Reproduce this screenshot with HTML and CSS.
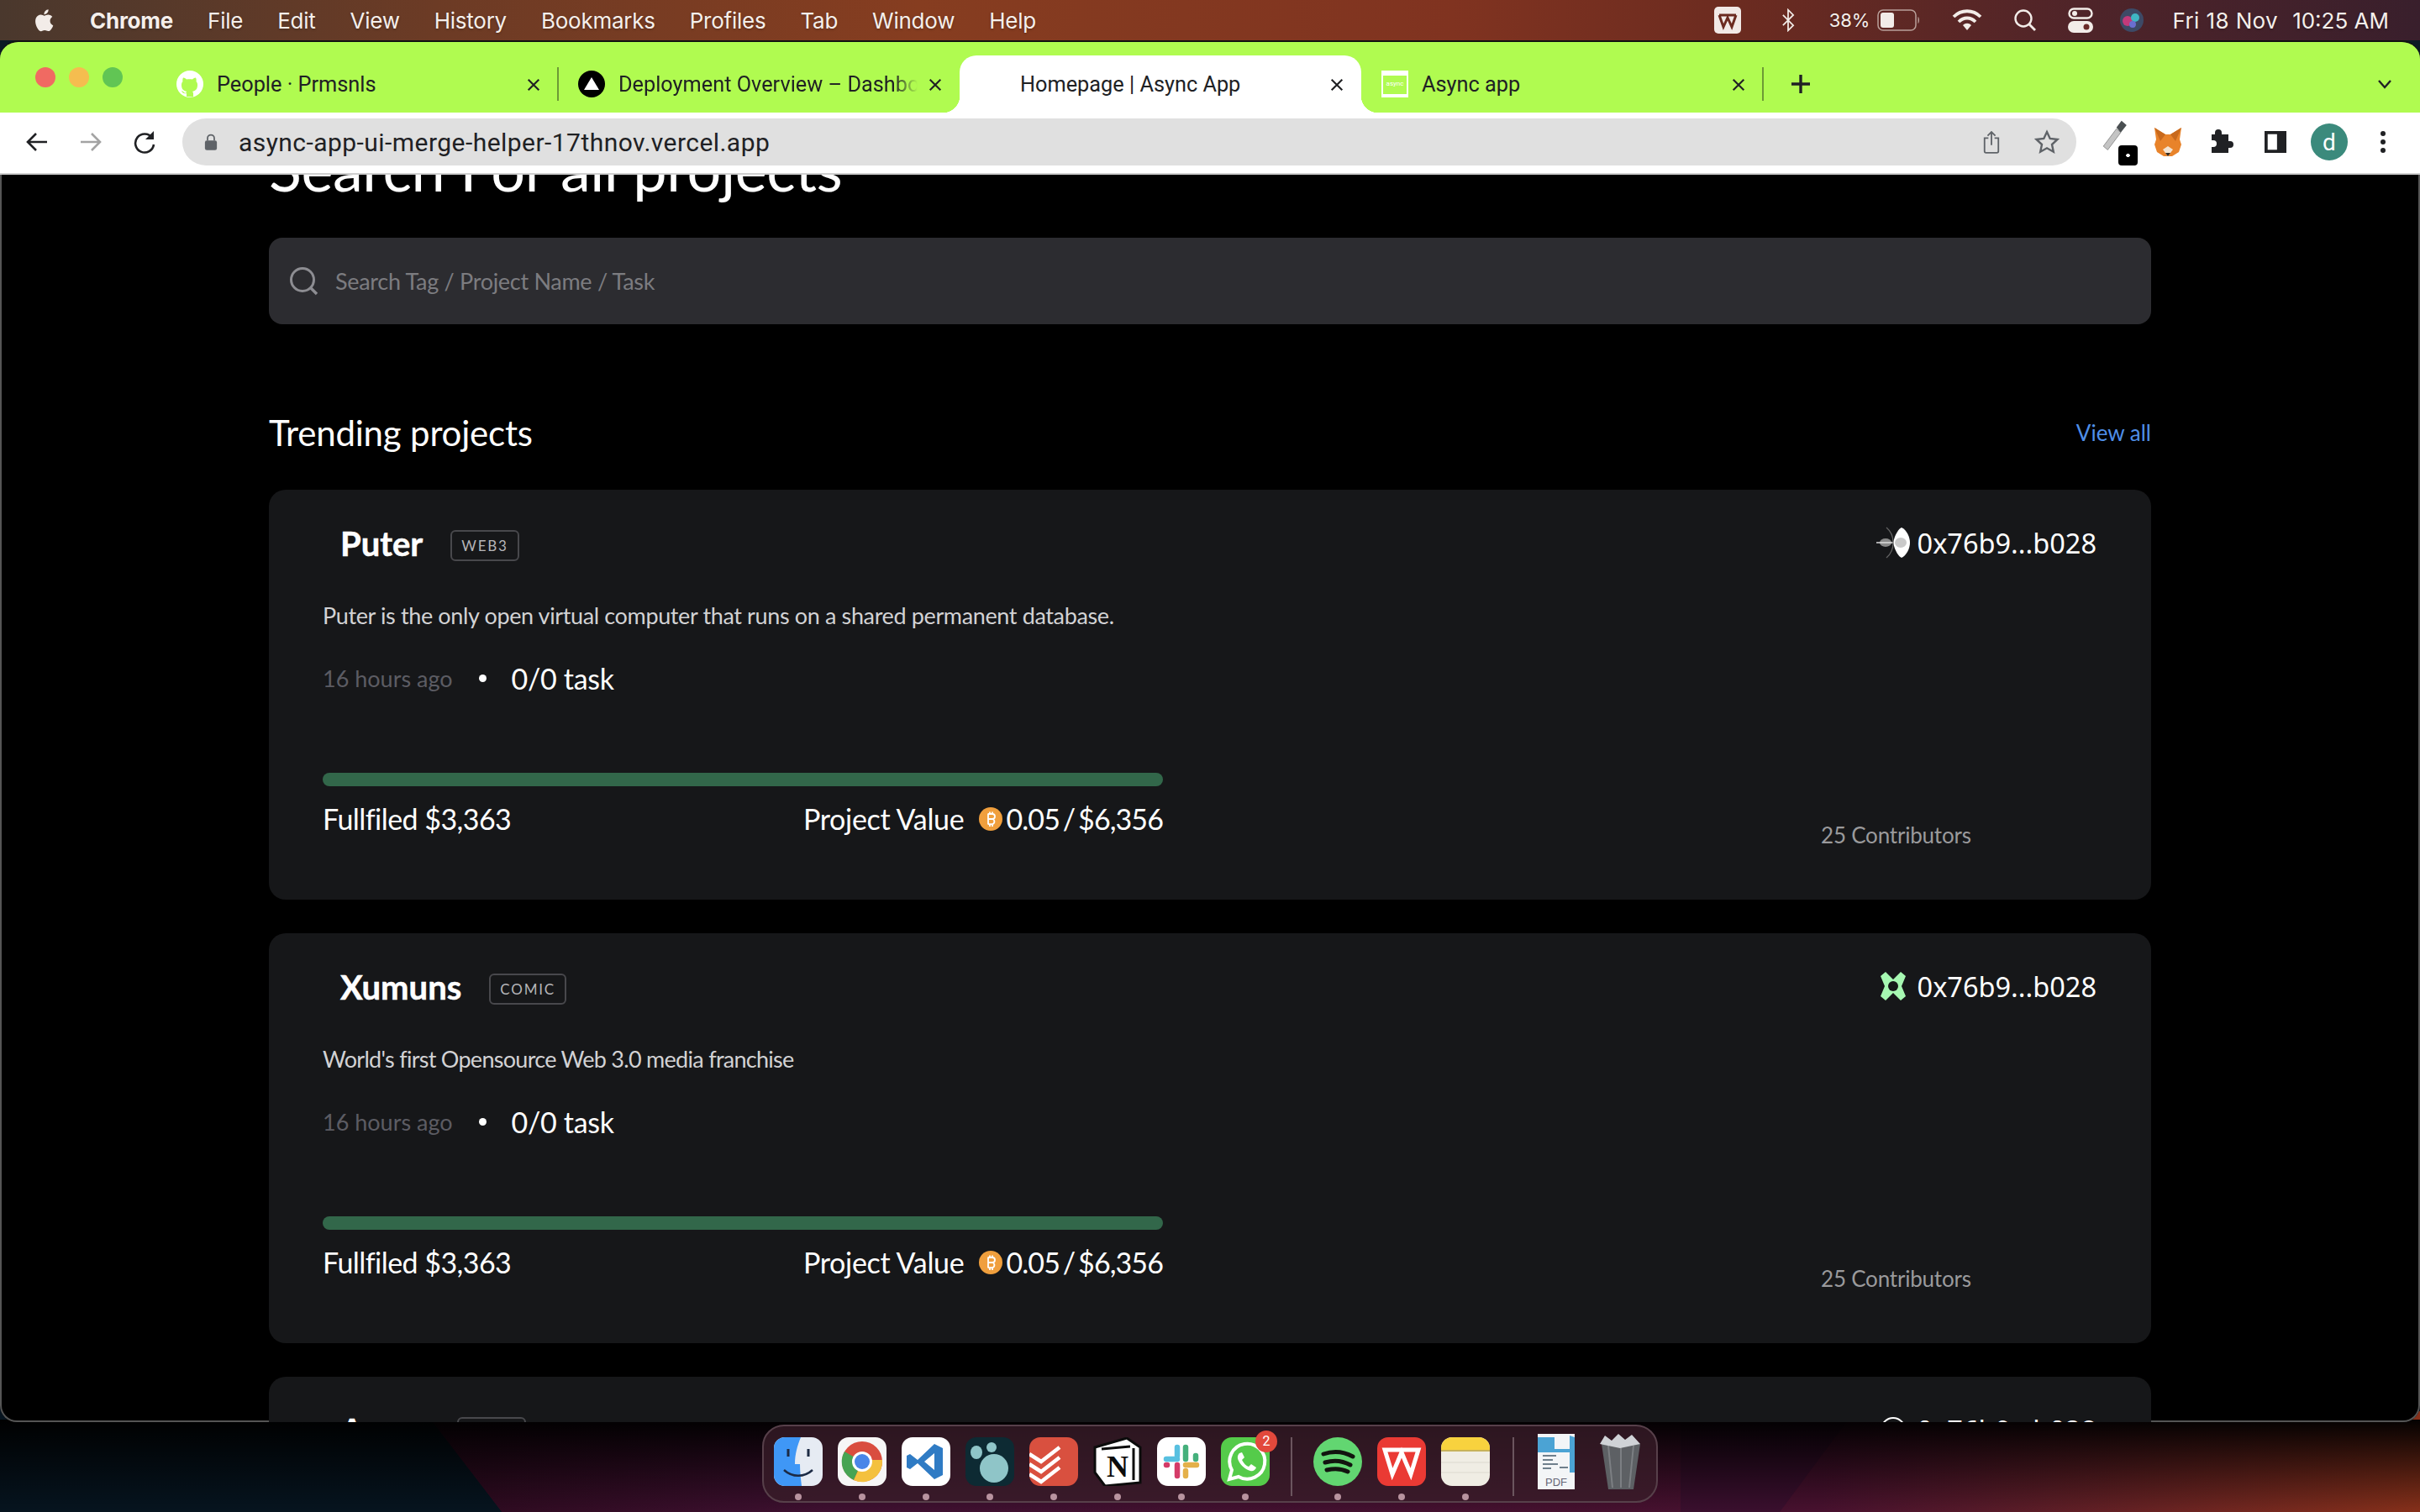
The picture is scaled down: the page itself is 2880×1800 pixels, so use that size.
FILE: index.html
```html
<!DOCTYPE html>
<html lang="en">

<head>
    <meta charset="UTF-8">
    <title>Homepage | Async App</title>
    <link rel="stylesheet" href="styles.css">
</head>

<body>
    <svg class="hidden-defs" width="0" height="0">
        <defs>
            <symbol id="close" viewBox="0 0 20 20">
                <path d="M3 3l14 14M17 3L3 17" stroke="#202124" stroke-width="2.4" fill="none" />
            </symbol>
            <symbol id="coin" viewBox="0 0 28 28">
                <circle cx="14" cy="14" r="14" fill="#f09f3d" />
                <path d="M11 7.5v13M11 8h5a3 3 0 0 1 0 6h-5m5 0a3.2 3.2 0 0 1 0 6.2h-5M13 5.5v3M16 5.5v3M13 20v3M16 20v3" stroke="#fff" stroke-width="1.8" fill="none" />
            </symbol>
            <symbol id="puter" viewBox="0 0 40 40">
                <path d="M20 20C22 10 27 3 30 2c6 3 10 11 10 18s-4 15-10 18c-3-1-8-8-10-18z" fill="#fff" />
                <ellipse cx="29" cy="20" rx="7" ry="6" fill="#c9c9c9" />
                <ellipse cx="11" cy="20" rx="7" ry="5" fill="#8a8a8a" />
                <path d="M0 20h20" stroke="#ddd" stroke-width="1.5" />
                <path d="M12 2c6 5 8 11 8 18s-2 13-8 18" stroke="#666" stroke-width="1.2" fill="none" />
            </symbol>
            <symbol id="xumuns" viewBox="0 0 32 36">
                <path d="M1 6l6-5 9 9 9-9 6 5-5 12 5 12-6 5-9-9-9 9-6-5 5-12z" fill="#a6f8b2" />
                <circle cx="16" cy="18" r="6" fill="#161719" />
            </symbol>
        </defs>
    </svg>

    <svg class="wallpaper" viewBox="0 0 2880 1800" preserveAspectRatio="none">
        <defs>
            <linearGradient id="wall-warm" x1="0" x2="1" y1="0" y2="0">
                <stop offset="0" stop-color="#2c0a1e" />
                <stop offset="0.2" stop-color="#3e1030" />
                <stop offset="0.7" stop-color="#48112f" />
                <stop offset="0.8" stop-color="#5a1c28" />
                <stop offset="1" stop-color="#86301a" />
            </linearGradient>
            <linearGradient id="wall-shade" x1="0" x2="0" y1="0" y2="1">
                <stop offset="0" stop-color="#000" stop-opacity="0.97" />
                <stop offset="1" stop-color="#000" stop-opacity="0" />
            </linearGradient>
        </defs>
        <rect width="2880" height="1800" fill="#0c1a24" />
        <polygon points="505,1680 2880,1680 2880,1800 597,1800" fill="url(#wall-warm)" />
        <polygon points="2207,1680 2118,1800 2000,1800 2000,1680" fill="#3a0f2e" />
        <polygon points="0,1680 505,1680 597,1800 0,1800" fill="#06141f" />
        <rect y="1690" width="2880" height="110" fill="url(#wall-shade)" />
    </svg>

    <header class="menubar">
        <div class="menu-left">
            <svg class="apple" viewBox="0 0 26 32">
                <path d="M21.6 17c0-3.3 2.7-4.800 2.800-4.900-1.500-2.200-3.900-2.500-4.700-2.600-2-.2-3.900 1.200-4.900 1.200-1 0-2.600-1.200-4.300-1.100-2.200 0-4.200 1.300-5.300 3.200-2.300 4-.6 9.900 1.600 13.100 1.100 1.600 2.400 3.400 4.100 3.300 1.600-.1 2.300-1.100 4.300-1.100s2.600 1.100 4.300 1c1.800 0 2.900-1.600 4-3.200 1.300-1.800 1.800-3.600 1.800-3.700-.1 0-3.700-1.400-3.700-5.200zM18.300 7.300c.9-1.100 1.500-2.600 1.300-4.100-1.300.1-2.900.9-3.800 2-.8 1-1.500 2.500-1.300 4 1.400.1 2.900-.8 3.800-1.900z" fill="#f2ece8" />
            </svg>
            <span class="app-name">Chrome</span>
            <span>File</span>
            <span>Edit</span>
            <span>View</span>
            <span>History</span>
            <span>Bookmarks</span>
            <span>Profiles</span>
            <span>Tab</span>
            <span>Window</span>
            <span>Help</span>
        </div>
        <div class="menu-right">
            <svg class="status-wps" viewBox="0 0 32 32">
                <rect width="32" height="32" rx="5" fill="#f1e9e6" />
                <path d="M6 10l5 14 5-11 5 11 5-14M6 10h20" stroke="#6b2a20" stroke-width="3" fill="none" />
            </svg>
            <svg class="status-bt" viewBox="0 0 20 32">
                <path d="M3 9l14 14-7 7V2l7 7L3 23" stroke="#f2ece8" stroke-width="2" fill="none" />
            </svg>
            <span class="status-pct">38%</span>
            <svg class="status-battery" viewBox="0 0 52 26">
                <rect x="1" y="1" width="45" height="24" rx="6" stroke="#b9a09a" stroke-width="1.500" fill="none" />
                <rect x="4" y="4" width="16" height="18" rx="3" fill="#f2ece8" />
                <path d="M48.500 9c2 1 2 7 0 8z" fill="#b9a09a" />
            </svg>
            <svg class="status-wifi" viewBox="0 0 36 26">
                <path d="M2 9c9-9 23-9 32 0M8 15c6-6 14-6 20 0" stroke="#f2ece8" stroke-width="3.800" fill="none" />
                <path d="M13 19c3-3 7-3 10 0l-5 6z" fill="#f2ece8" />
            </svg>
            <svg class="status-search" viewBox="0 0 28 28">
                <circle cx="12" cy="12" r="9.500" stroke="#f2ece8" stroke-width="2.400" fill="none" />
                <path d="M19 19l7 7" stroke="#f2ece8" stroke-width="2.800" />
            </svg>
            <svg class="status-control" viewBox="0 0 30 30">
                <rect x="1.500" y="1.500" width="27" height="11" rx="5.500" stroke="#f2ece8" stroke-width="2.400" fill="none" />
                <circle cx="8" cy="7" r="3" fill="#f2ece8" />
                <rect x="0" y="16" width="30" height="14" rx="7" fill="#f2ece8" />
                <circle cx="22" cy="23" r="3.500" fill="#6a2a28" />
            </svg>
            <svg class="status-siri" viewBox="0 0 28 28">
                <circle cx="14" cy="14" r="14" fill="#3d4a66" />
                <circle cx="9" cy="15" r="6" fill="#c23a7a" />
                <circle cx="18" cy="11" r="5" fill="#3fb6c4" />
                <circle cx="15" cy="19" r="4" fill="#6a6fd0" />
            </svg>
            <span class="status-date">Fri 18 Nov</span>
            <span class="status-time">10:25 AM</span>
        </div>
    </header>

    <main class="window">
        <div class="tabstrip">
            <div class="lights">
                <span class="light light-red"></span>
                <span class="light light-yellow"></span>
                <span class="light light-green"></span>
            </div>
            <div class="tab">
                <svg class="favicon" viewBox="0 0 32 32">
                    <circle cx="16" cy="16" r="16" fill="#fff" />
                    <path d="M12 31v-4c-4 1-5-1-6-3 1 0 2 1 3 2 1 1 3 1 3-1-4-1-6-3-6-8 0-2 .5-3 1.500-4-.3-1-.3-3 .5-4.500 2 0 3 1 4 2 2-.5 5-.5 7 0 1-1 2-2 4-2 .8 1.500.8 3.500.5 4.500 1 1 1.500 2 1.500 4 0 5-2 7-6 8 1 1 1 2 1 3v3.500z" fill="#b0fb50" />
                </svg>
                <span class="tab-title">People · Prmsnls</span>
                <svg class="tab-close"><use href="#close" /></svg>
            </div>
            <span class="tab-sep"></span>
            <div class="tab">
                <svg class="favicon" viewBox="0 0 32 32">
                    <circle cx="16" cy="16" r="16" fill="#000" />
                    <path d="M16 8l9 15H7z" fill="#fff" />
                </svg>
                <span class="tab-title tab-title-fade">Deployment Overview – Dashboard</span>
                <svg class="tab-close"><use href="#close" /></svg>
            </div>
            <div class="tab tab-active">
                <span class="favicon"></span>
                <span class="tab-title">Homepage | Async App</span>
                <svg class="tab-close"><use href="#close" /></svg>
            </div>
            <div class="tab">
                <span class="favicon favicon-async">async</span>
                <span class="tab-title">Async app</span>
                <svg class="tab-close"><use href="#close" /></svg>
            </div>
            <span class="tab-sep"></span>
            <svg class="tab-new" viewBox="0 0 24 24">
                <path d="M12 1v22M1 12h22" stroke="#202124" stroke-width="3.400" />
            </svg>
            <svg class="tab-list" viewBox="0 0 18 12">
                <path d="M2 2l7 8 7-8" stroke="#202124" stroke-width="2.400" fill="none" />
            </svg>
        </div>

        <div class="toolbar">
            <svg class="nav-icon" viewBox="0 0 28 28">
                <path d="M26 14H4M13 4L3 14l10 10" stroke="#202124" stroke-width="2.600" fill="none" />
            </svg>
            <svg class="nav-icon" viewBox="0 0 28 28">
                <path d="M2 14h22M15 4l10 10-10 10" stroke="#a3a3a3" stroke-width="2.600" fill="none" />
            </svg>
            <svg class="nav-icon" viewBox="0 0 28 28">
                <path d="M23 9A11 11 0 1 0 25 17" stroke="#202124" stroke-width="2.600" fill="none" />
                <path d="M25 1v10H15z" fill="#202124" />
            </svg>
            <div class="urlbar">
                <svg class="lock" viewBox="0 0 18 24">
                    <path d="M4.500 10V7a4.500 4.500 0 0 1 9 0v3" stroke="#5f6368" stroke-width="2" fill="none" />
                    <rect x="1" y="10" width="16" height="13" rx="2.500" fill="#5f6368" />
                </svg>
                <span class="url-text">async-app-ui-merge-helper-17thnov.vercel.app</span>
                <svg class="url-share" viewBox="0 0 24 30">
                    <path d="M8 10H3v17a2 2 0 0 0 2 2h14a2 2 0 0 0 2-2V10h-5M12 19V2M7 7l5-5 5 5" stroke="#5f6368" stroke-width="2" fill="none" />
                </svg>
                <svg class="url-star" viewBox="0 0 30 30">
                    <path d="M15 3l3.700 8 8.800 1-6.500 6 1.800 8.700L15 22.300l-7.800 4.400L9 18l-6.500-6 8.800-1z" stroke="#5f6368" stroke-width="2.400" fill="none" />
                </svg>
            </div>
            <div class="ext-icons">
                <span class="ext ext-dropper">
                    <svg viewBox="0 0 36 44">
                        <path d="M2 36L20 12l6 5L8 41z" fill="#c4c4c4" stroke="#8a8a8a" />
                        <path d="M20 10L27 1l7 6-8 10z" fill="#4a4f52" />
                    </svg>
                    <span class="ext-badge"></span>
                </span>
                <svg class="ext ext-fox" viewBox="0 0 36 36">
                    <path d="M2 1l13 8h6l13-8-2 14 2 6-3 9-8 5h-10l-8-5-3-9 2-6z" fill="#e8832a" />
                    <path d="M2 1l13 8-6 8zM34 1L21 9l6 8z" fill="#c8691c" />
                    <path d="M12 27l6 8 6-8-6-4z" fill="#f4e3d0" />
                    <path d="M15 31h6l-3 4z" fill="#33291f" />
                </svg>
                <svg class="ext ext-puzzle" viewBox="0 0 30 30">
                    <path d="M11 1a4 4 0 0 1 4 4v2h8v8h2a4 4 0 0 1 0 8h-2v6H3v-7h2a4 4 0 0 0 0-8H3V7h4V5a4 4 0 0 1 4-4z" fill="#202124" transform="translate(-1 -1)" />
                </svg>
                <svg class="ext ext-sidebar" viewBox="0 0 28 28">
                    <rect x="2" y="2" width="24" height="24" fill="none" stroke="#202124" stroke-width="4" />
                    <rect x="16" y="2" width="10" height="24" fill="#202124" />
                </svg>
                <span class="avatar">d</span>
                <svg class="ext ext-more" viewBox="0 0 8 28">
                    <circle cx="4" cy="4" r="3" fill="#202124" />
                    <circle cx="4" cy="14" r="3" fill="#202124" />
                    <circle cx="4" cy="24" r="3" fill="#202124" />
                </svg>
            </div>
        </div>

        <div class="page">
            <h1 class="page-title">Search For all projects</h1>

            <div class="search-box">
                <svg class="search-icon" viewBox="0 0 36 36">
                    <circle cx="16" cy="16" r="13.500" stroke="#8d8d92" stroke-width="3" fill="none" />
                    <path d="M26 26l7 7" stroke="#8d8d92" stroke-width="3.400" />
                </svg>
                <span class="search-placeholder">Search Tag / Project Name / Task</span>
            </div>

            <div class="section-head">
                <h2>Trending projects</h2>
                <a class="view-all">View all</a>
            </div>

            <article class="card">
                <div class="card-top">
                    <h3 class="card-name">Puter</h3>
                    <span class="card-tag">WEB3</span>
                    <div class="card-owner">
                        <svg class="owner-icon"><use href="#puter" /></svg>
                        <span>0x76b9...b028</span>
                    </div>
                </div>
                <p class="card-desc">Puter is the only open virtual computer that runs on a shared permanent database.</p>
                <div class="card-meta">
                    <span class="meta-time">16 hours ago</span>
                    <span class="meta-dot"></span>
                    <span class="meta-task">0/0 task</span>
                </div>
                <div class="card-bottom">
                    <div class="funding">
                        <div class="progress"></div>
                        <div class="funding-row">
                            <span>Fullfiled $3,363</span>
                            <span class="funding-value">Project Value <svg class="coin"><use href="#coin" /></svg><span class="funding-amount">0.05 / $6,356</span></span>
                        </div>
                    </div>
                    <span class="contributors">25 Contributors</span>
                </div>
            </article>

            <article class="card">
                <div class="card-top">
                    <h3 class="card-name">Xumuns</h3>
                    <span class="card-tag">COMIC</span>
                    <div class="card-owner">
                        <svg class="owner-icon owner-icon-small"><use href="#xumuns" /></svg>
                        <span>0x76b9...b028</span>
                    </div>
                </div>
                <p class="card-desc card-desc-tight">World's first Opensource Web 3.0 media franchise</p>
                <div class="card-meta">
                    <span class="meta-time">16 hours ago</span>
                    <span class="meta-dot"></span>
                    <span class="meta-task">0/0 task</span>
                </div>
                <div class="card-bottom">
                    <div class="funding">
                        <div class="progress"></div>
                        <div class="funding-row">
                            <span>Fullfiled $3,363</span>
                            <span class="funding-value">Project Value <svg class="coin"><use href="#coin" /></svg><span class="funding-amount">0.05 / $6,356</span></span>
                        </div>
                    </div>
                    <span class="contributors">25 Contributors</span>
                </div>
            </article>

            <article class="card">
                <div class="card-top">
                    <h3 class="card-name">Arena</h3>
                    <span class="card-tag">WEB3</span>
                    <div class="card-owner">
                        <svg class="owner-icon" viewBox="0 0 40 40"><circle cx="20" cy="20" r="14" fill="none" stroke="#fff" stroke-width="2" /></svg>
                        <span>0x76b9...b028</span>
                    </div>
                </div>
            </article>
        </div>
    </main>

    <nav class="dock">
        <div class="dock-item">
            <svg class="dock-icon" viewBox="0 0 58 58">
                <rect width="58" height="58" rx="13" fill="#e6ebf3" />
                <path d="M13 0h19c-4 10-7 20-7 32h6c0 9 1 18 2 26H13A13 13 0 0 1 0 45V13A13 13 0 0 1 13 0z" fill="#3f97f6" />
                <path d="M17 14v9M41 14v9" stroke="#1c2a44" stroke-width="3" />
                <path d="M12 39c10 9 24 9 34 0" stroke="#1c2a44" stroke-width="2.500" fill="none" />
            </svg>
            <span class="dock-dot"></span>
        </div>
        <div class="dock-item">
            <svg class="dock-icon" viewBox="0 0 58 58">
                <rect width="58" height="58" rx="13" fill="#f6f6f6" />
                <circle cx="29" cy="29" r="24" fill="#d94d3f" />
                <path d="M29 29L8 17A24 24 0 0 0 19 51z" fill="#47a453" />
                <path d="M29 29L19 51A24 24 0 0 0 53 27H32z" fill="#f4c13e" />
                <circle cx="29" cy="29" r="12" fill="#fff" />
                <circle cx="29" cy="29" r="9" fill="#4a86e8" />
            </svg>
            <span class="dock-dot"></span>
        </div>
        <div class="dock-item">
            <svg class="dock-icon" viewBox="0 0 58 58">
                <rect width="58" height="58" rx="13" fill="#fff" />
                <path d="M39 8l10 5v32l-10 5-20-19-9 7-4-2V22l4-2 9 7zM39 19l-12 10 12 10z" fill="#2f7bc4" fill-rule="evenodd" />
            </svg>
            <span class="dock-dot"></span>
        </div>
        <div class="dock-item">
            <svg class="dock-icon" viewBox="0 0 58 58">
                <rect width="58" height="58" rx="13" fill="#0d2a33" />
                <ellipse cx="13" cy="18" rx="7" ry="8" fill="#8fc5c8" />
                <ellipse cx="31" cy="12" rx="6" ry="6" fill="#8fc5c8" />
                <circle cx="34" cy="37" r="17" fill="#8fc5c8" />
            </svg>
            <span class="dock-dot"></span>
        </div>
        <div class="dock-item">
            <svg class="dock-icon" viewBox="0 0 58 58">
                <rect width="58" height="58" rx="13" fill="#d9503f" />
                <path d="M0 20l14 9L36 12M0 32l14 9 22-17M0 44l14 9 22-17" stroke="#fff" stroke-width="4.500" fill="none" />
            </svg>
            <span class="dock-dot"></span>
        </div>
        <div class="dock-item">
            <svg class="dock-icon" viewBox="0 0 58 58">
                <path d="M2 12L40 1l16 11v42L14 58 2 42z" fill="#fff" stroke="#0c0c0c" stroke-width="3" />
                <path d="M10 14l34-3M48 13v38" stroke="#0c0c0c" stroke-width="3" />
                <text class="notion-n" x="29" y="47" text-anchor="middle">N</text>
            </svg>
            <span class="dock-dot"></span>
        </div>
        <div class="dock-item">
            <svg class="dock-icon" viewBox="0 0 58 58">
                <rect width="58" height="58" rx="13" fill="#fff" />
                <path d="M24 12v10M11 26h13" stroke="#58c0e0" stroke-width="6.500" stroke-linecap="round" />
                <path d="M34 12v14M46 22v4" stroke="#45b07c" stroke-width="6.500" stroke-linecap="round" />
                <path d="M34 33h13M34 40v6" stroke="#e4b04a" stroke-width="6.500" stroke-linecap="round" />
                <path d="M11 33h1M24 33v13" stroke="#d43c68" stroke-width="6.500" stroke-linecap="round" />
            </svg>
            <span class="dock-dot"></span>
        </div>
        <div class="dock-item dock-item-badge">
            <svg class="dock-icon" viewBox="0 0 58 58">
                <rect width="58" height="58" rx="13" fill="#55cb4a" />
                <path d="M10 50l3-11a21 21 0 1 1 8 8z" fill="none" stroke="#fff" stroke-width="4" />
                <path d="M22 19c-2 2-3 5-1 9 3 6 8 10 14 12 3 1 6-1 7-4l-6-4-3 3c-3-1-6-4-8-8l3-3-3-6z" fill="#fff" />
            </svg>
            <span class="dock-badge">2</span>
            <span class="dock-dot"></span>
        </div>
        <span class="dock-sep dock-sep-first"></span>
        <div class="dock-item">
            <svg class="dock-icon" viewBox="0 0 58 58">
                <circle cx="29" cy="29" r="29" fill="#62d671" />
                <path d="M12 20c12-4 24-3 35 3M14 30c10-3 21-2 30 3M16 39c8-2 17-2 25 2" stroke="#12140f" stroke-width="5" stroke-linecap="round" fill="none" />
            </svg>
            <span class="dock-dot"></span>
        </div>
        <div class="dock-item">
            <svg class="dock-icon" viewBox="0 0 58 58">
                <rect width="58" height="58" rx="13" fill="#ea3a34" />
                <path d="M9 15h40l-9 29-6-14-5-12-5 12-6 14z" fill="none" stroke="#fff" stroke-width="5" />
            </svg>
            <span class="dock-dot"></span>
        </div>
        <div class="dock-item">
            <svg class="dock-icon" viewBox="0 0 58 58">
                <rect width="58" height="58" rx="13" fill="#f0ede4" />
                <path d="M0 15V13A13 13 0 0 1 13 0h32a13 13 0 0 1 13 13v2z" fill="#f8d23e" />
                <path d="M0 16h58" stroke="#c7b25a" stroke-width="2" />
                <path d="M0 30h58M0 42h58" stroke="#dcd9cf" stroke-width="1" />
            </svg>
            <span class="dock-dot"></span>
        </div>
        <span class="dock-sep dock-sep-second"></span>
        <div class="dock-item dock-item-tall">
            <svg class="dock-icon" viewBox="0 0 58 66">
                <rect x="6" y="0" width="44" height="66" fill="#f3f5f7" />
                <path d="M6 4h20v14h18V2l6 2v42H44V22H6z" fill="#4ba3d4" />
                <path d="M12 26h16M12 31h12M12 36h18M12 41h10M32 40h10" stroke="#44586a" stroke-width="1.500" />
                <text class="pdf-label" x="28" y="62" text-anchor="middle">PDF</text>
            </svg>
        </div>
        <div class="dock-item dock-item-tall">
            <svg class="dock-icon" viewBox="0 0 58 66">
                <path d="M6 12l8 54h30l8-54z" fill="#5d6064" />
                <path d="M14 14l5 50M29 14v50M44 14l-5 50" stroke="#7c7f83" stroke-width="2" />
                <path d="M4 12L10 2l8 6 8-8 8 7 8-6 10 11-24 5z" fill="#cfd2d6" />
            </svg>
        </div>
    </nav>
</body>

</html>
```

FILE: styles.css
```css
* {
    box-sizing: border-box;
}

html,
body {
    margin: 0;
    padding: 0;
    height: 1800px;
    overflow: hidden;
}

body {
    position: relative;
    background: #0c1a24;
    font-family: "Lato", "Open Sans", sans-serif;
}

.hidden-defs {
    position: absolute;
}

.wallpaper {
    position: absolute;
    left: 0;
    top: 0;
    width: 2880px;
    height: 1800px;
}

/* menu bar */
.menubar {
    position: relative;
    height: 48px;
    display: flex;
    justify-content: space-between;
    align-items: center;
    padding: 0 37px 0 38px;
    background: linear-gradient(90deg, #4a382d 0%, #6c3b25 18%, #863d20 38%, #803320 60%, #6b2b20 72%, #4f2429 86%, #391f2c 100%);
    color: #f5efeb;
    font-family: "Inter", sans-serif;
    font-size: 26px;
    text-shadow: 0 1px 3px rgba(0, 0, 0, 0.3);
}

.menu-left,
.menu-right {
    display: flex;
    align-items: center;
}

.menu-left {
    gap: 41px;
    letter-spacing: -0.25px;
}

.apple {
    width: 26px;
    height: 32px;
    margin-right: 2px;
}

.app-name {
    font-weight: 700;
}

.status-wps {
    width: 32px;
    height: 32px;
    margin-right: 46px;
}

.status-bt {
    width: 20px;
    height: 28px;
    margin-right: 39px;
}

.status-pct {
    margin-right: 9px;
    font-size: 22px;
}

.status-battery {
    width: 52px;
    height: 26px;
    margin-right: 37px;
}

.status-wifi {
    width: 36px;
    height: 26px;
    margin-right: 37px;
}

.status-search {
    width: 28px;
    height: 28px;
    margin-right: 37px;
}

.status-control {
    width: 30px;
    height: 30px;
    margin-right: 32px;
}

.status-siri {
    width: 28px;
    height: 28px;
    margin-right: 34px;
}

.status-date {
    margin-right: 17px;
    letter-spacing: 0.4px;
}

/* browser window */
.window {
    position: relative;
    height: 1645px;
    margin-top: 0;
    display: flex;
    flex-direction: column;
    border-top: 2px solid #111;
    border-radius: 22px 22px 20px 20px;
    overflow: hidden;
    background: #000;
    box-shadow: inset 0 0 0 2px #555;
}

.tabstrip {
    height: 84px;
    display: flex;
    align-items: flex-end;
    flex: none;
    background: #b0fb50;
    padding-left: 42px;
}

.lights {
    align-self: center;
    display: flex;
    gap: 16px;
    width: 144px;
}

.light {
    width: 24px;
    height: 24px;
    border-radius: 50%;
}

.light-red {
    background: #f06a62;
}

.light-yellow {
    background: #f5bd4f;
}

.light-green {
    background: #61c554;
}

.tab {
    position: relative;
    width: 478px;
    height: 68px;
    flex: none;
    display: flex;
    align-items: center;
    padding: 0 20px 0 24px;
    color: #202124;
    font-family: "Roboto", sans-serif;
    font-size: 25.3px;
}

.tab-sep {
    width: 2px;
    height: 40px;
    align-self: center;
    margin: 16px -1px 0;
    flex: none;
    background: #6d9a35;
}

.tab-active {
    background: #fff;
    border-radius: 20px 20px 0 0;
}

.tab-active::before,
.tab-active::after {
    content: "";
    position: absolute;
    bottom: 0;
    width: 20px;
    height: 20px;
}

.tab-active::before {
    left: -20px;
    background: radial-gradient(circle at 0 0, #b0fb50 20px, #fff 20.5px);
}

.tab-active::after {
    right: -20px;
    background: radial-gradient(circle at 100% 0, #b0fb50 20px, #fff 20.5px);
}

.favicon {
    width: 32px;
    height: 32px;
    flex: none;
    margin-right: 16px;
}

.favicon-async {
    background: linear-gradient(#fff 0 4px, #b0fb50 4px 26px, #fff 26px);
    border: 2px solid #fff;
    color: #fff;
    font-size: 8px;
    line-height: 28px;
    text-align: center;
    overflow: hidden;
}

.tab-title {
    flex: 1;
    white-space: nowrap;
    overflow: hidden;
}

.tab-title-fade {
    margin-right: 6px;
    -webkit-mask-image: linear-gradient(90deg, #000 92%, transparent 100%);
    mask-image: linear-gradient(90deg, #000 92%, transparent 100%);
}

.tab-close {
    width: 18px;
    height: 18px;
    flex: none;
    margin-left: 12px;
    margin-top: 2px;
}

.tab-title-fade + .tab-close {
    margin-left: 6px;
}

.tab-new {
    width: 24px;
    height: 24px;
    align-self: center;
    margin: 16px 0 0 33px;
}

.tab-list {
    width: 18px;
    height: 12px;
    align-self: center;
    margin: 16px 0 0 674px;
}

.toolbar {
    height: 74px;
    flex: none;
    display: flex;
    align-items: center;
    padding: 0 30px 2px 30px;
    background: #fff;
    border-bottom: 2px solid #cfcfcf;
}

.nav-icon {
    width: 28px;
    height: 28px;
    margin-right: 36px;
}

.urlbar {
    width: 2254px;
    height: 56px;
    margin-left: -5px;
    display: flex;
    align-items: center;
    padding: 0 26px;
    border-radius: 28px;
    background: #e0e0e0;
}

.lock {
    width: 16px;
    height: 22px;
    margin-right: 25px;
}

.url-text {
    flex: 1;
    color: #202124;
    font-family: "Roboto", sans-serif;
    font-size: 30px;
    letter-spacing: 0.45px;
}

.url-share {
    width: 22px;
    height: 28px;
    margin-right: 40px;
}

.url-star {
    width: 30px;
    height: 30px;
    margin-right: -6px;
}

.ext-icons {
    display: flex;
    align-items: center;
    margin-left: 28px;
}

.ext {
    width: 36px;
    height: 36px;
}

.ext-dropper {
    position: relative;
    display: block;
    margin-right: 27px;
}

.ext-fox {
    margin-right: 32px;
}

.ext-puzzle {
    width: 30px;
    height: 30px;
    margin-right: 35px;
}

.ext-sidebar {
    width: 26px;
    height: 26px;
    margin-right: 29px;
}

.ext-more {
    width: 10px;
    height: 28px;
    margin-left: 37px;
}

.ext-dropper svg {
    width: 36px;
    height: 38px;
    margin-top: -8px;
}

.ext-badge {
    position: absolute;
    left: 22px;
    top: 22px;
    width: 23px;
    height: 24px;
    border-radius: 4px;
    background: radial-gradient(circle, #fff 0 2px, #000 2.5px);
}

.avatar {
    width: 44px;
    height: 44px;
    border-radius: 50%;
    display: flex;
    align-items: center;
    justify-content: center;
    background: #3b8a7c;
    color: #fff;
    font-family: "Roboto", sans-serif;
    font-size: 28px;
}

/* page content */
.page {
    flex: 1;
    overflow: hidden;
    padding: 0 320px;
    color: #fff;
}

.page-title {
    margin: -48px 0 0;
    height: 80px;
    font-size: 72px;
    font-weight: 400;
    line-height: 80px;
    letter-spacing: -0.45px;
}

.search-box {
    margin-top: 43px;
    height: 103px;
    display: flex;
    align-items: center;
    padding: 0 24px;
    border-radius: 16px;
    background: #2c2c30;
}

.search-icon {
    width: 36px;
    height: 36px;
    margin-right: 19px;
}

.search-placeholder {
    color: #7c7c80;
    font-size: 27px;
    letter-spacing: -0.3px;
}

.section-head {
    margin-top: 99px;
    height: 60px;
    display: flex;
    justify-content: space-between;
    align-items: center;
}

.section-head h2 {
    margin: 0;
    font-size: 42px;
    font-weight: 400;
    letter-spacing: -0.2px;
}

.view-all {
    color: #4f8fe8;
    font-size: 26px;
}

.card {
    height: 488px;
    margin: 38px 0 40px;
    padding: 48px 65px 0 64px;
    border-radius: 20px;
    background: #161719;
}

.card-top {
    display: flex;
    align-items: center;
    height: 37px;
}

.card-name {
    margin: -6px 33px 0 21px;
    font-size: 40px;
    font-weight: 700;
    -webkit-text-stroke: 0.5px #fff;
}

.card-tag {
    height: 37px;
    display: flex;
    align-items: center;
    padding: 0 11px;
    border: 2px solid #48484c;
    border-radius: 6px;
    color: #b5b5b8;
    font-size: 17px;
    letter-spacing: 1.8px;
}

.card-owner {
    margin-left: auto;
    display: flex;
    align-items: center;
    font-family: "Noto Sans", sans-serif;
    font-size: 32.5px;
    margin-top: -7px;
}

.owner-icon {
    width: 40px;
    height: 40px;
    margin-right: 9px;
}

.owner-icon-small {
    width: 32px;
    height: 36px;
    margin-right: 13px;
}

.card-desc {
    margin: 45px 0 0;
    color: #d2d2d4;
    font-size: 27px;
    line-height: 40px;
    letter-spacing: -0.37px;
}

.card-desc-tight {
    letter-spacing: -0.72px;
}

.card-meta {
    margin-top: 32px;
    height: 44px;
    display: flex;
    align-items: center;
}

.meta-time {
    color: #5c5c63;
    font-size: 27px;
}

.meta-dot {
    width: 9px;
    height: 9px;
    margin: 0 30px 0 31px;
    border-radius: 50%;
    background: #fff;
}

.meta-task {
    font-size: 34px;
    letter-spacing: -0.3px;
}

.card-bottom {
    display: flex;
    margin-top: 91px;
}

.funding {
    width: 1000px;
}

.progress {
    height: 16px;
    border-radius: 8px;
    background: #32674a;
}

.funding-row {
    display: flex;
    justify-content: space-between;
    margin-top: 17px;
    font-size: 34px;
    line-height: 44px;
    letter-spacing: -0.55px;
}

.funding-value {
    display: flex;
    align-items: center;
    letter-spacing: -0.3px;
}

.funding-amount {
    letter-spacing: -0.9px;
    word-spacing: -4px;
}

.coin {
    width: 28px;
    height: 28px;
    margin: 0 4px 0 18px;
}

.contributors {
    margin: 54px 0 0 783px;
    color: #9a9a9c;
    font-size: 26px;
    line-height: 40px;
    letter-spacing: -0.2px;
    white-space: nowrap;
}

/* dock */
.dock {
    position: absolute;
    left: 907px;
    top: 1696px;
    width: 1066px;
    height: 93px;
    display: flex;
    padding: 13px 3px 0;
    border: 2px solid #57404a;
    border-radius: 26px;
    background: rgba(58, 30, 42, 0.75);
}

.dock-item {
    position: relative;
    width: 76px;
    flex: none;
    display: flex;
    flex-direction: column;
    align-items: center;
}

.dock-item-tall {
    margin-top: -4px;
}

.dock-item-tall .dock-icon {
    height: 66px;
}

.dock-icon {
    width: 58px;
    height: 58px;
    flex: none;
}

.dock-dot {
    width: 8px;
    height: 8px;
    margin-top: 9px;
    border-radius: 50%;
    background: #b8939f;
}

.dock-badge {
    position: absolute;
    top: -8px;
    right: 0;
    width: 26px;
    height: 26px;
    border-radius: 50%;
    background: #e2493c;
    color: #fff;
    font-family: "Roboto", sans-serif;
    font-size: 16px;
    line-height: 26px;
    text-align: center;
}

.dock-sep {
    width: 2px;
    height: 70px;
    flex: none;
    background: #6b555e;
}

.dock-sep-first {
    margin: 0 16px;
}

.dock-sep-second {
    margin: 0 13px 0 18px;
}

.notion-n {
    font-family: "Liberation Serif", serif;
    font-size: 36px;
    font-weight: 700;
    fill: #0c0c0c;
}

.pdf-label {
    font-family: "Liberation Sans", sans-serif;
    font-size: 13px;
    fill: #667;
}
```
